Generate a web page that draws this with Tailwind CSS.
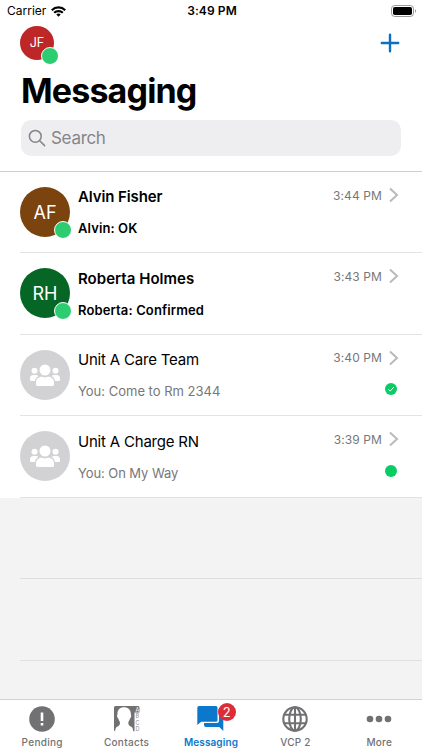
<!DOCTYPE html>
<html lang="en">
<head>
<meta charset="utf-8">
<meta name="viewport" content="width=device-width, initial-scale=1">
<title>Messaging</title>
<script src="https://cdn.jsdelivr.net/npm/@tailwindcss/browser@4"></script>
</head>
<body class="bg-white">
<svg class="hidden">
  <symbol id="chevron" viewBox="0 0 10 16"><path d="M1 1.500 8 8 1 14.500" fill="none" stroke="#bababc" stroke-width="2"/></symbol>
  <symbol id="group" viewBox="0 0 32 24">
    <circle cx="5.500" cy="7.800" r="3"/><circle cx="26.500" cy="7.800" r="3"/><circle cx="16" cy="7" r="5.500"/>
    <path d="M1 18v-2.300a3.600 3.600 0 0 1 3.600-3.700h2.200c1 0 1.900.4 2.600 1-2.100 1.200-3.100 2.700-3.400 5H2a1 1 0 0 1-1-1zM31 18v-2.300a3.600 3.600 0 0 0-3.600-3.700h-2.200c-1 0-1.900.4-2.600 1 2.100 1.200 3.100 2.700 3.400 5H30a1 1 0 0 0 1-1z"/>
    <path d="M7 21.600v-2.200c0-3.300 2.300-5.700 5.500-5.700 1.200 0 1.900.7 3.500.7s2.300-.7 3.500-.7c3.200 0 5.500 2.400 5.500 5.700v2.200c0 .9-.7 1.500-1.500 1.500H8.500c-.8 0-1.500-.6-1.500-1.500z"/>
  </symbol>
</svg>
<div class="flex h-[750px] w-[422px] flex-col overflow-hidden bg-white font-['Inter','Liberation_Sans',sans-serif] text-black">
  <div class="grid h-[22px] grid-cols-3 items-center pr-[5px] pl-[7px] text-[12px] leading-[22px]">
    <div class="flex items-center gap-[5px]">
      <span>Carrier</span>
      <svg class="h-[11px] w-[15px]" viewBox="0 0 15 11"><g fill="none" stroke="#000" stroke-width="2.200"><path d="M.8 4.200a9.500 9.500 0 0 1 13.400 0"/><path d="M3.200 6.800a6.100 6.100 0 0 1 8.600 0"/></g><path d="M7.500 10.800 5.300 8.600a3.100 3.100 0 0 1 4.400 0z"/></svg>
    </div>
    <div class="text-center font-semibold tracking-[0.100px]">3:49 PM</div>
    <svg class="h-[12px] w-[26px] justify-self-end" viewBox="0 0 26 12"><rect x=".5" y=".5" width="22" height="11" rx="3.200" fill="none" stroke="#999"/><rect x="2" y="2" width="19" height="8" rx="1.800"/><path d="M24 4.300v3.400q1.200-.5 1.200-1.700T24 4.300" fill="#999"/></svg>
  </div>

  <header class="flex h-[149px] flex-col pr-[21px] pl-[20px]">
    <div class="mt-[4px] flex h-[34px] items-center justify-between">
      <div class="relative flex size-[34px] items-center justify-center rounded-full bg-[#bd2727] pt-px text-[12.500px] text-white">JF
        <span class="absolute top-[21px] left-[21px] size-[18px] rounded-full border border-white bg-[#2ecc71]"></span>
      </div>
      <svg class="mr-[1px] size-[20px]" viewBox="0 0 20 20"><path d="M10 1.800v16.400M1.800 10h16.400" stroke="#0b70c0" stroke-width="2.400" stroke-linecap="round"/></svg>
    </div>
    <h1 class="mt-[11px] ml-[1px] h-[40px] text-[34px] leading-[40px] font-bold tracking-[-0.850px] whitespace-nowrap">Messaging</h1>
    <div class="mt-[9px] ml-[1px] flex h-[36px] items-center gap-[5px] rounded-[10px] bg-[#eeeef0] pl-[7px] text-[17px] tracking-[-0.300px] text-[#858589]">
      <svg class="size-[18px]" viewBox="0 0 18 18"><g fill="none" stroke="#858589" stroke-width="1.500" stroke-linecap="round"><circle cx="7.300" cy="7.300" r="5.900"/><path d="m11.700 11.700 4.900 4.900"/></g></svg>
      <span class="pt-px">Search</span>
    </div>
  </header>

  <main class="flex h-[528px] flex-col overflow-hidden border-t border-[#cfcfd0] bg-[#f3f3f3]">
    <section class="flex h-[81px] shrink-0 bg-white pl-[20px]">
      <div class="flex flex-1 border-b border-[#e3e3e5] pt-[15px] pr-[23px]">
        <div class="relative flex size-[50px] items-center justify-center rounded-full bg-[#7b430d] pt-px text-[18px] text-white">AF
          <span class="absolute top-[34px] left-[34px] size-[18px] rounded-full border border-white bg-[#2ecc71]"></span>
        </div>
        <div class="ml-[8px] flex-1 whitespace-nowrap">
          <div class="h-[20px] text-[15px] leading-[20px] font-semibold tracking-[-0.100px]">Alvin Fisher</div>
          <div class="mt-[12px] h-[18px] text-[13px] leading-[18px] font-semibold tracking-[0.100px]">Alvin: OK</div>
        </div>
        <div class="flex h-[16px] items-center gap-[7px] text-[12px] leading-[16px] tracking-[0.100px] text-[#77777a]"><span class="pt-px">3:44 PM</span><svg class="h-[16px] w-[10px]"><use href="#chevron"/></svg></div>
      </div>
    </section>
    <section class="flex h-[82px] shrink-0 bg-white pl-[20px]">
      <div class="flex flex-1 border-b border-[#e3e3e5] pt-[15px] pr-[23px]">
        <div class="relative flex size-[50px] items-center justify-center rounded-full bg-[#056625] pt-px text-[18px] text-white">RH
          <span class="absolute top-[34px] left-[34px] size-[18px] rounded-full border border-white bg-[#2ecc71]"></span>
        </div>
        <div class="ml-[8px] flex-1 pt-px whitespace-nowrap">
          <div class="h-[20px] text-[15px] leading-[20px] font-semibold tracking-[0.030px]">Roberta Holmes</div>
          <div class="mt-[12px] h-[18px] text-[13px] leading-[18px] font-semibold tracking-[0.130px]">Roberta: Confirmed</div>
        </div>
        <div class="flex h-[16px] items-center gap-[7px] text-[12px] leading-[16px] tracking-[0.100px] text-[#77777a]"><span class="pt-px">3:43 PM</span><svg class="h-[16px] w-[10px]"><use href="#chevron"/></svg></div>
      </div>
    </section>
    <section class="flex h-[81px] shrink-0 bg-white pl-[20px]">
      <div class="flex flex-1 border-b border-[#e3e3e5] pt-[15px] pr-[23px]">
        <div class="flex size-[50px] items-center justify-center rounded-full bg-[#d2d2d4]"><svg class="h-[24px] w-[32px] fill-white"><use href="#group"/></svg></div>
        <div class="ml-[8px] flex-1 whitespace-nowrap">
          <div class="h-[20px] text-[15px] leading-[20px] tracking-[-0.200px]">Unit A Care Team</div>
          <div class="mt-[12px] h-[18px] text-[13px] leading-[18px] text-[#77777a]">You: Come to Rm 2344</div>
        </div>
        <div class="flex flex-col items-end">
          <div class="flex h-[16px] items-center gap-[7px] text-[12px] leading-[16px] tracking-[0.100px] text-[#77777a]"><span>3:40 PM</span><svg class="h-[16px] w-[10px]"><use href="#chevron"/></svg></div>
          <svg class="mt-[17px] mr-[2px] size-[12px]" viewBox="0 0 12 12"><circle cx="6" cy="6" r="6" fill="#08cc64"/><path d="m3.300 6.300 1.900 1.800 3.600-4" fill="none" stroke="#fff" stroke-width="1"/></svg>
        </div>
      </div>
    </section>
    <section class="flex h-[82px] shrink-0 bg-white pl-[20px]">
      <div class="flex flex-1 border-b border-[#e3e3e5] pt-[15px] pr-[23px]">
        <div class="flex size-[50px] items-center justify-center rounded-full bg-[#d2d2d4]"><svg class="h-[24px] w-[32px] fill-white"><use href="#group"/></svg></div>
        <div class="ml-[8px] flex-1 pt-px whitespace-nowrap">
          <div class="h-[20px] text-[15px] leading-[20px] tracking-[-0.200px]">Unit A Charge RN</div>
          <div class="mt-[12px] h-[18px] text-[13px] leading-[18px] tracking-[-0.080px] text-[#77777a]">You: On My Way</div>
        </div>
        <div class="flex flex-col items-end">
          <div class="flex h-[16px] items-center gap-[7px] text-[12px] leading-[16px] tracking-[0.100px] text-[#77777a]"><span class="pt-px">3:39 PM</span><svg class="h-[16px] w-[10px]"><use href="#chevron"/></svg></div>
          <span class="mt-[18px] mr-[2px] size-[12px] rounded-full bg-[#08cc64]"></span>
        </div>
      </div>
    </section>
    <div class="ml-[20px] h-[81px] shrink-0 border-b border-[#dedee1]"></div>
    <div class="ml-[20px] h-[82px] shrink-0 border-b border-[#e0e0e2]"></div>
  </main>

  <nav class="grid h-[51px] grid-cols-5 border-t border-[#d2d2d3] bg-white text-[10px] leading-[14px] font-medium text-[#717173]">
    <div class="flex flex-col items-center pt-[6px]">
      <svg class="size-[26px]" viewBox="0 0 26 26"><circle cx="13" cy="13" r="12.800" fill="#717173"/><path d="M11.700 6.500h2.600V15h-2.600zM11.700 17h2.600v2.600h-2.600z" fill="#fff"/></svg>
      <span class="mt-[3px] tracking-[0.300px]">Pending</span>
    </div>
    <div class="flex flex-col items-center pt-[6px]">
      <svg class="size-[26px]" viewBox="0 0 26 26"><path d="M1.500 0H24q1.500 0 1.500 1.500V6.500H20.500V25.300H1.500Q0 25.300 0 24V1.500Q0 0 1.500 0Z" fill="#717173"/><path d="M10 1.300c4.200 0 6.800 2.600 6.800 6.300 0 1.300.5 1.500.4 2.700-.2 1.500-1.100 1.800-1.400 3-.4 1.500-1.500 2.300-1.500 3.500 0 2.600 1.400 3.300 3 4 1.300.6 1.700 2.600 2 5.200H1c.3-2.600.7-4.600 2-5.200 1.600-.7 3-1.400 3-4 0-1.200-1.100-2-1.500-3.500-.3-1.200-1.200-1.500-1.400-3-.1-1.200.4-1.400.4-2.700 0-3.700 2.300-6.300 6.500-6.300Z" fill="#fff"/><g font-family="Inter,sans-serif" font-size="5.500" font-weight="400"><text x="21.400" y="5.500" fill="#fff">A</text><text x="21.400" y="12" fill="#8b8b8d">B</text><text x="21.400" y="18.500" fill="#8b8b8d">C</text><text x="21.400" y="25" fill="#8b8b8d">D</text></g></svg>
      <span class="mt-[3px] tracking-[0.300px]">Contacts</span>
    </div>
    <div class="relative flex flex-col items-center pt-[6px] text-[#0b78cc]">
      <svg class="h-[26px] w-[27px]" viewBox="0 0 27 26" fill="#0b78cc"><path d="M2 0h17q1.500 0 1.500 1.500v12.700q0 1.500-1.500 1.500H4.200L.3 19V2Q.3 0 2 0Z"/><path d="M22 6h2.800Q26.300 6 26.300 7.700V25l-4-4H9q-2 0-2-2v-2h12.500q2.500 0 2.500-2.500Z"/></svg>
      <span class="absolute top-[3px] left-[49px] flex size-[18px] items-center justify-center rounded-full bg-[#dc2d37] text-[13px] font-normal text-white">2</span>
      <span class="mt-[3px] font-semibold tracking-[0.100px]">Messaging</span>
    </div>
    <div class="flex flex-col items-center pt-[6px]">
      <svg class="size-[26px]" viewBox="0 0 26 26" fill="none" stroke="#717173" stroke-width="2.100"><circle cx="13" cy="13" r="11.700"/><ellipse cx="13" cy="13" rx="5.800" ry="11.700"/><path d="M13 1.300v23.400M2.500 8.800h21M2.500 17.200h21"/></svg>
      <span class="mt-[3px] tracking-[0.200px]">VCP 2</span>
    </div>
    <div class="flex flex-col items-center pt-[6px] pr-px">
      <svg class="size-[26px]" viewBox="0 0 26 26" fill="#717173"><circle cx="4" cy="13" r="3.300"/><circle cx="13" cy="13" r="3.300"/><circle cx="22" cy="13" r="3.300"/></svg>
      <span class="mt-[3px] tracking-[0.200px]">More</span>
    </div>
  </nav>
</div>
</body>
</html>
